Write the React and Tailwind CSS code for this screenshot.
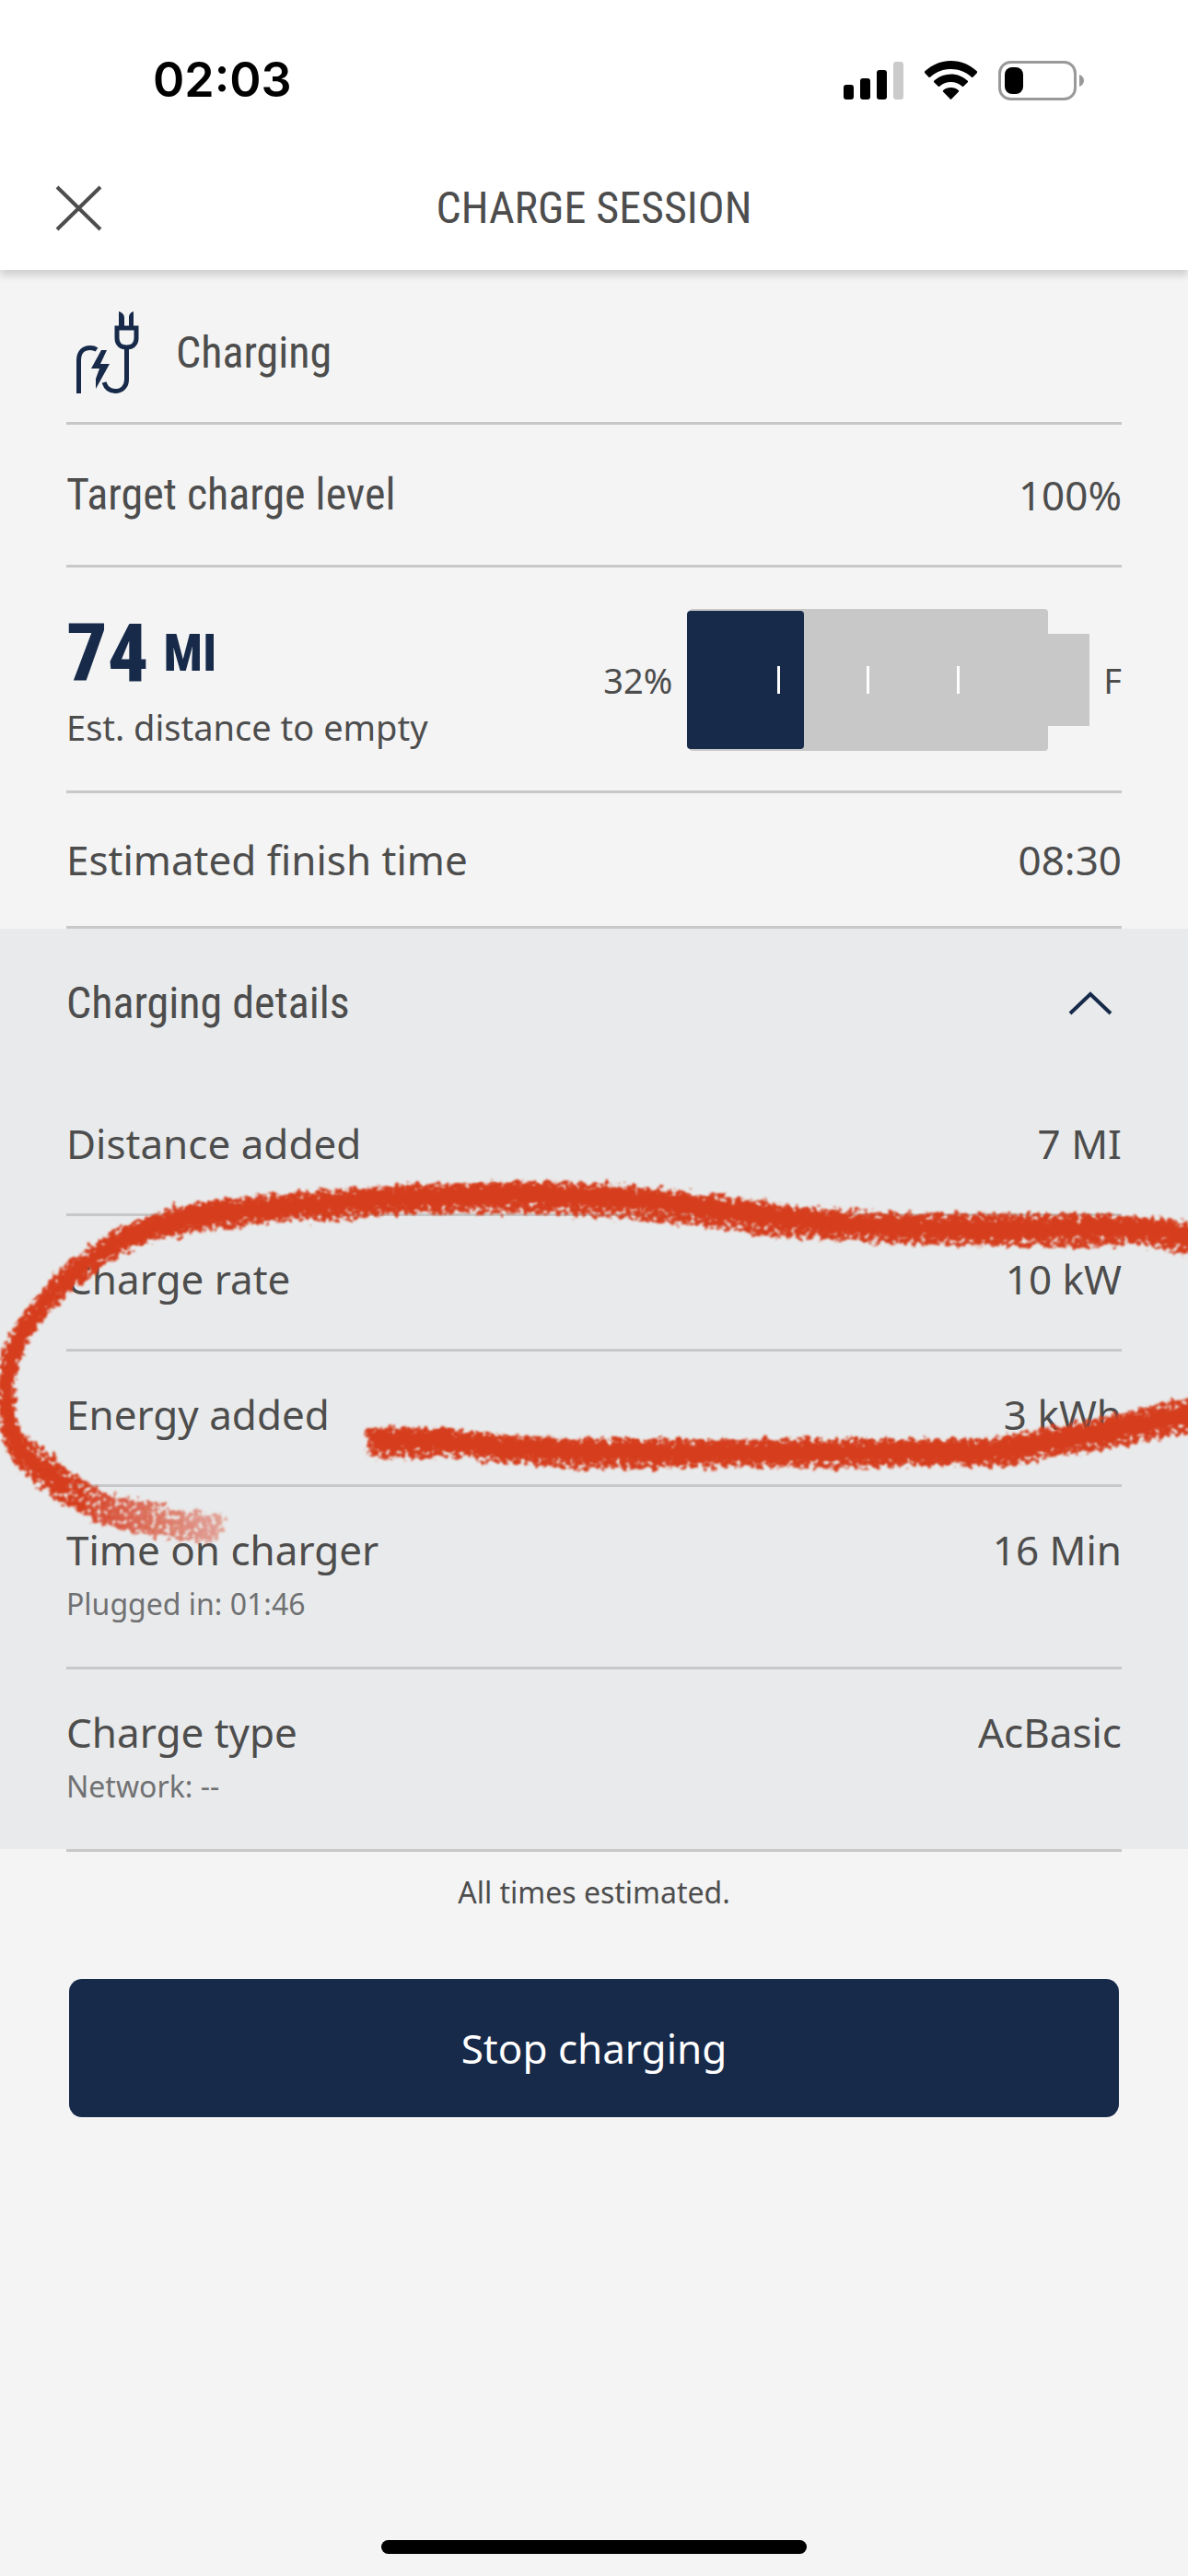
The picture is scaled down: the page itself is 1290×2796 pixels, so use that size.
const MAIN_ROW = 'flex items-center justify-between border-b-[3px] border-[#c8c8c8]'

const DETAILS = [
  { label: 'Distance added', value: '7 MI' },
  { label: 'Charge rate', value: '10 kW' },
  { label: 'Energy added', value: '3 kWh' },
  { label: 'Time on charger', value: '16 Min', note: 'Plugged in: 01:46' },
  { label: 'Charge type', value: 'AcBasic', note: 'Network: --' },
]

function StatusBar() {
  return (
    <div className="flex items-center justify-between pt-[54px] pl-[166px] pr-28">
      <span className="font-['Inter'] text-[52px] leading-[66px] font-semibold text-black">02:03</span>
      <div className="flex items-center gap-[23px]">
        <svg className="w-[65px] h-[43px]" viewBox="0 0 65 43" aria-hidden="true">
          <rect x="0" y="26" width="11" height="16" rx="3" />
          <rect x="18" y="19" width="11" height="23" rx="3" />
          <rect x="36" y="10" width="11" height="32" rx="3" />
          <rect x="54" y="1" width="11" height="41" rx="3" fill="#cacaca" />
        </svg>
        <svg className="w-[57px] h-[43px]" viewBox="0 0 57 43" aria-hidden="true">
          <path d="M28.500 0C39.500 0 49.500 4.300 57 11.500C57.300 12 57.300 12.500 57 13L52.500 17.700C52 18.200 51.400 18.200 51 17.700C45 12 37 9 28.500 9C20 9 12 12 6 17.700C5.600 18.200 5 18.200 4.500 17.700L0 13C-.3 12.500-.3 12 0 11.500C7.500 4.300 17.500 0 28.500 0Z" />
          <path d="M28.500 14.500C35.500 14.500 42 17.200 46.800 21.800C47.200 22.300 47.200 22.800 46.800 23.200L42.200 27.800C41.800 28.200 41.300 28.200 40.800 27.800C37.500 24.700 33.200 23 28.500 23C23.800 23 19.500 24.700 16.200 27.800C15.700 28.200 15.200 28.200 14.800 27.800L10.200 23.200C9.800 22.800 9.800 22.300 10.200 21.800C15 17.200 21.500 14.500 28.500 14.500Z" />
          <path d="M28.500 29C31.700 29 34.700 30.200 37 32.200C37.400 32.600 37.400 33.200 37 33.600L29.200 41.600C28.800 42 28.200 42 27.800 41.600L20 33.600C19.600 33.200 19.600 32.600 20 32.200C22.300 30.200 25.300 29 28.500 29Z" />
        </svg>
        <svg className="w-[94px] h-[43px]" viewBox="0 0 94 43" aria-hidden="true">
          <rect x="1.500" y="1.500" width="82" height="40" rx="12" fill="none" stroke="#999" strokeWidth="3" />
          <rect x="7" y="7" width="20" height="29" rx="8" />
          <path d="M88 15C91 16 93 18.500 93 21.500C93 24.500 91 27 88 28Z" fill="#999" />
        </svg>
      </div>
    </div>
  )
}

function ChargingIcon() {
  return (
    <svg className="w-[68px] h-[90px]" viewBox="0 0 68 90" fill="none" stroke="#172a4a" strokeWidth="5" aria-hidden="true">
      <path d="M2.500 89V53C2.500 44 8 39.500 15 39.500C18 39.500 20 40.200 22 41.500" />
      <path d="M30 77C32 83 36 86.500 42 86.500C50 86.500 54.500 81 54.500 74V41" />
      <path d="M44 18H65V29C65 35.500 61 39 54.500 39C48 39 44 35.500 44 29Z" />
      <path d="M46 0C49 1 52 3 52 7V16H46ZM62 0C59 1 57 3 57 7V16H62Z" fill="#172a4a" stroke="none" />
      <path d="M27 42H33L26 57H36L21 84V73L25 62H16Z" fill="#172a4a" stroke="none" />
    </svg>
  )
}

function BatteryGauge() {
  return (
    <div className="flex items-center text-[38px] leading-[52px]">
      <span className="mr-4">32%</span>
      <svg className="w-[437px] h-[154px]" viewBox="0 0 437 154" role="img" aria-label="Battery at 32%">
        <rect x="2" width="390" height="154" rx="4" fill="#c8c8c8" />
        <rect x="380" y="27" width="57" height="100" fill="#c8c8c8" />
        <rect y="2" width="127" height="150" rx="4" fill="#172a4a" />
        <path d="M99.500 62V92M196.500 62V92M294.500 62V92" stroke="#fff" strokeWidth="3" />
      </svg>
      <span className="ml-[15px]">F</span>
    </div>
  )
}

// Hand-drawn marker loop over the rate and energy rows
function Scribble() {
  return (
    <svg
      className="absolute inset-0 w-full h-full pointer-events-none"
      viewBox="0 1008 1290 999"
      preserveAspectRatio="none"
      aria-hidden="true"
    >
      <defs>
        <filter id="crayon" filterUnits="userSpaceOnUse" x="-20" y="1240" width="1330" height="480">
          <feTurbulence type="fractalNoise" baseFrequency="0.14" numOctaves="2" seed="4" result="warp" />
          <feDisplacementMap in="SourceGraphic" in2="warp" scale="16" xChannelSelector="R" yChannelSelector="G" result="rough" />
          <feTurbulence type="fractalNoise" baseFrequency="0.2" numOctaves="2" seed="11" />
          <feColorMatrix values="0 0 0 0 0  0 0 0 0 0  0 0 0 0 0  5 0 0 0 -1.4" result="grain" />
          <feComposite in="rough" in2="grain" operator="in" />
          <feGaussianBlur stdDeviation="0.9" />
        </filter>
        <filter id="core" filterUnits="userSpaceOnUse" x="-20" y="1240" width="1330" height="480">
          <feTurbulence type="fractalNoise" baseFrequency="0.12" numOctaves="2" seed="7" result="warp" />
          <feDisplacementMap in="SourceGraphic" in2="warp" scale="18" xChannelSelector="R" yChannelSelector="G" />
          <feGaussianBlur stdDeviation="0.9" />
        </filter>
        <linearGradient id="tail" gradientUnits="userSpaceOnUse" x1="80" y1="0" x2="245" y2="0">
          <stop offset="0" stopColor="#d63c1f" />
          <stop offset="1" stopColor="#d63c1f" stopOpacity="0.4" />
        </linearGradient>
      </defs>
      <g filter="url(#crayon)" fill="#d63c1f">
        <path d="M1310 1330L1290 1326L1225 1320L1130 1318L1000 1317L900 1313L840 1306L790 1299L700 1288L645 1284L590 1283L500 1283L420 1287L350 1292L300 1296L235 1303L190 1310L160 1321L120 1337L95 1354L70 1373L45 1399L20 1430L4 1458L0 1485L-2 1520L0 1555L4 1573L20 1595L40 1611L65 1630L90 1643L100 1612L75 1596L50 1575L30 1560L18 1545L14 1525L15 1495L22 1475L35 1450L55 1424L80 1399L105 1380L135 1359L170 1346L220 1336L260 1333L310 1325L360 1325L410 1320L450 1316L550 1317L620 1319L680 1322L740 1330L790 1335L830 1342L900 1346L1000 1351L1100 1353L1190 1353L1240 1351L1290 1364L1310 1366Z" />
        <path d="M90 1643L112 1655L150 1665L195 1672L238 1674L245 1645L200 1640L165 1632L120 1622L100 1610Z" fill="url(#tail)" />
        <path d="M398 1550L470 1549L535 1556L580 1560L645 1562L800 1562L950 1562L1070 1562L1110 1554L1180 1542L1230 1530L1290 1517L1310 1513V1552L1290 1556L1250 1563L1200 1573L1150 1580L1095 1592L1000 1591L920 1594L800 1592L700 1594L600 1593L570 1588L530 1588L510 1580L440 1584L400 1582Z" />
      </g>
      <g filter="url(#core)" fill="none" stroke="#d63c1f" strokeLinejoin="round">
        <path d="M1300 1343Q1250 1333 1190 1332Q1080 1337 980 1332Q880 1328 800 1315Q700 1301 600 1298Q480 1296 400 1303Q300 1311 230 1317Q170 1326 135 1346" strokeWidth="20" />
        <path d="M140 1343Q80 1374 42 1422Q8 1465 7 1510Q6 1560 30 1582Q50 1600 72 1614" strokeWidth="14" />
        <path d="M404 1564Q480 1561 530 1569Q600 1576 700 1576Q900 1577 1080 1575Q1180 1558 1300 1533" strokeWidth="20" />
      </g>
    </svg>
  )
}

function DetailRow({ label, value, note, last }) {
  return (
    <li className={`flex items-start justify-between pt-[38px] pb-[46px] ${last ? '' : 'border-b-[3px] border-[#c8c8c8]'}`}>
      <div>
        <p>{label}</p>
        {note && <p className="mt-[7px] text-[32px] leading-[44px] text-[#707173]">{note}</p>}
      </div>
      <p>{value}</p>
    </li>
  )
}

export default function App() {
  return (
    <div className="flex flex-col min-h-screen bg-[#f4f4f4] font-['Noto_Sans',sans-serif] text-[44px] leading-[60px] text-[#4d4d4d]">
      <header className="relative bg-white shadow-[0_6px_8px_rgba(0,0,0,0.15)]">
        <StatusBar />
        <div className="grid grid-cols-[1fr_auto_1fr] items-center pt-[76px] pb-[37px] px-[60px]">
          <button type="button" aria-label="Close" className="justify-self-start">
            <svg className="w-[51px] h-[50px]" viewBox="0 0 51 50" fill="none" stroke="#4d4d4d" strokeWidth="4" aria-hidden="true">
              <path d="M2 2L49 48M49 2L2 48" />
            </svg>
          </button>
          <h1 className="font-['Roboto_Condensed'] text-[48px] leading-[60px]">CHARGE SESSION</h1>
        </div>
      </header>

      <main>
        <section className="px-[72px]">
          <div className="flex items-center gap-10 pt-[45px] pb-[30px] pl-[11px] border-b-[3px] border-[#c8c8c8]">
            <ChargingIcon />
            <h2 className="font-['Roboto_Condensed'] text-[48px]">Charging</h2>
          </div>
          <div className={`${MAIN_ROW} py-[46px]`}>
            <h2 className="font-['Roboto_Condensed'] text-[48px]">Target charge level</h2>
            <p>100%</p>
          </div>
          <div className="flex items-end justify-between pt-[45px] pb-[43px] border-b-[3px] border-[#c8c8c8]">
            <div>
              <p className="flex items-center gap-4 font-['Roboto_Condensed'] text-[88px] leading-[88px] font-extrabold text-[#172a4a]">
                74 <span className="text-[56px]">MI</span>
              </p>
              <p className="mt-[10px] text-[38px] leading-[52px]">Est. distance to empty</p>
            </div>
            <BatteryGauge />
          </div>
          <div className={`${MAIN_ROW} py-[42px]`}>
            <p>Estimated finish time</p>
            <p>08:30</p>
          </div>
        </section>

        <section className="relative px-[72px] bg-[#e9eaeb]">
          <button type="button" aria-expanded="true" className="flex items-center justify-between w-full pt-[51px] pb-[54px] pr-[10px]">
            <span className="font-['Roboto_Condensed'] text-[48px]">Charging details</span>
            <svg className="w-12 h-[26px]" viewBox="0 0 48 26" fill="none" stroke="#172a4a" strokeWidth="4" aria-hidden="true">
              <path d="M2 24L24 3L46 24" />
            </svg>
          </button>
          <ul>
            {DETAILS.map((row, i) => (
              <DetailRow key={row.label} {...row} last={i === DETAILS.length - 1} />
            ))}
          </ul>
          <Scribble />
        </section>

        <section className="px-[72px]">
          <p className="pt-[22px] border-t-[3px] border-[#c8c8c8] text-center text-[32px] leading-[44px]">All times estimated.</p>
          <div className="px-[3px] pt-[72px]">
            <button type="button" className="w-full py-[45px] rounded-[14px] bg-[#172a4a] text-white">
              Stop charging
            </button>
          </div>
        </section>
      </main>

      <div className="mt-auto mb-6 mx-auto w-[462px] h-[15px] rounded-full bg-black" />
    </div>
  )
}
